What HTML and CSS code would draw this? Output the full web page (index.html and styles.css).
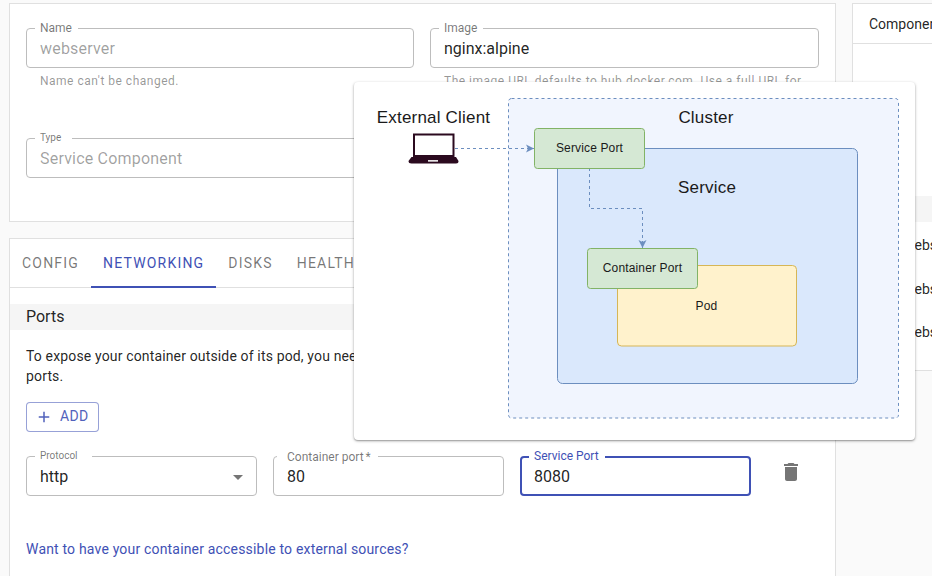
FILE: index.html
```html
<!DOCTYPE html>
<html lang="en">
<head>
<meta charset="utf-8">
<title>Component networking</title>
<link rel="stylesheet" href="styles.css">
</head>
<body>
<div class="page">
  <main class="main-col">
    <section class="card basics">
      <div class="field-grid">
        <div>
          <div class="field">
            <span class="label notch-name">Name</span>
            <span class="value disabled">webserver</span>
          </div>
          <p class="helper">Name can't be changed.</p>
        </div>
        <div>
          <div class="field">
            <span class="label notch-image">Image</span>
            <span class="value">nginx:alpine</span>
          </div>
          <p class="helper">The image URL defaults to hub.docker.com. Use a full URL for private registries.</p>
        </div>
        <div class="field">
          <span class="label small notch-type">Type</span>
          <span class="value disabled">Service Component</span>
        </div>
      </div>
    </section>

    <section class="card details">
      <nav class="tabs">
        <span class="tab">Config</span>
        <span class="tab active">Networking</span>
        <span class="tab">Disks</span>
        <span class="tab">Health</span>
      </nav>
      <h2 class="section-title">Ports</h2>
      <div class="section-body">
        <p class="intro">To expose your container outside of its pod, you need to define the container and service<br>ports.</p>
        <button class="add-btn" type="button">
          <svg class="plus" viewBox="0 0 24 24" width="18" height="18"><path d="M19 13h-6v6h-2v-6H5v-2h6V5h2v6h6v2z"/></svg>
          <span class="add-text">Add</span>
        </button>
        <div class="port-row">
          <div class="field port">
            <span class="label small notch-protocol">Protocol</span>
            <span class="value">http</span>
            <span class="arrow"></span>
          </div>
          <div class="field port">
            <span class="label notch-container">Container port<sup class="req">*</sup></span>
            <span class="value">80</span>
          </div>
          <div class="field port focused">
            <span class="label notch-service">Service Port</span>
            <span class="value">8080</span>
          </div>
          <svg class="trash" viewBox="0 0 24 24" width="24" height="24"><path d="M6 19c0 1.1.9 2 2 2h8c1.1 0 2-.9 2-2V7H6v12zM19 4h-3.5l-1-1h-5l-1 1H5v2h14V4z"/></svg>
        </div>
        <a class="link" href="#">Want to have your container accessible to external sources?</a>
      </div>
    </section>
  </main>

  <aside class="card side">
    <div class="side-head">Components</div>
    <div class="side-bar"></div>
    <ul class="side-list">
      <li>webserver</li>
      <li>webserver</li>
      <li>webserver</li>
    </ul>
  </aside>
</div>

<div class="popover">
  <svg class="diagram" viewBox="354 82 561 358" width="561" height="358">
    <defs>
      <marker id="tip" markerUnits="userSpaceOnUse" markerWidth="10" markerHeight="10" refX="8" refY="5" orient="auto">
        <path class="tip" d="M0 1 L8 5 L0 9 L2 5 Z"/>
      </marker>
    </defs>
    <rect class="cluster" x="508.5" y="98.5" width="390" height="319.5" rx="3"/>
    <rect class="service" x="557.5" y="148.5" width="300" height="235" rx="5"/>
    <rect class="pod" x="617.5" y="265.5" width="179" height="80.5" rx="4"/>
    <path class="flow" d="M455 148.5 H534" marker-end="url(#tip)"/>
    <path class="flow" d="M589.5 168 V208.5 H642.5 V248" marker-end="url(#tip)"/>
    <rect class="port-box" x="534.5" y="128.5" width="110" height="40" rx="3"/>
    <rect class="port-box" x="587.5" y="248.5" width="110" height="40" rx="3"/>
    <path class="laptop" d="M413 133.5 H454.5 V157 H413 Z M415 135.5 V155 H452.5 V135.5 Z"/>
    <path class="laptop" d="M411.5 157 H456 L458.5 161 Q458.5 163.500 456 163.500 H411.500 Q408.500 163.500 408.500 161 Z"/>
    <rect class="laptop-notch" x="428" y="160" width="10" height="1.700"/>
    <text class="t-big" x="433.500" y="122.500">External Client</text>
    <text class="t-big" x="706" y="122.500">Cluster</text>
    <text class="t-big" x="707" y="192.500">Service</text>
    <text class="t-small" x="589.500" y="151.500">Service Port</text>
    <text class="t-small" x="642.500" y="271.500">Container Port</text>
    <text class="t-small" x="706.500" y="309.500">Pod</text>
  </svg>
</div>
</body>
</html>
```

FILE: styles.css
```css
* { box-sizing: border-box; }

html, body {
  margin: 0;
  width: 932px;
  height: 576px;
  overflow: hidden;
  background: #fafafa;
}

body {
  position: relative;
  font-family: Roboto, "Liberation Sans", sans-serif;
  color: rgba(0, 0, 0, 0.87);
}

.page {
  display: flex;
  gap: 16px;
  padding: 3px 0 0 9px;
  width: 932px;
  height: 576px;
  overflow: hidden;
}

.main-col {
  width: 827px;
  flex: none;
  display: flex;
  flex-direction: column;
  gap: 16px;
}

.card {
  background: #fff;
  border: 1px solid #e0e0e0;
}

.basics {
  height: 219px;
  padding: 24px 16px 0;
}

.field-grid {
  display: grid;
  grid-template-columns: 388px 389px;
  column-gap: 16px;
  row-gap: 33px;
}

.field {
  position: relative;
  height: 40px;
  border: 1px solid #bdbdbd;
  border-radius: 4px;
  padding: 1px 13px 0;
  display: flex;
  align-items: center;
  background: #fff;
}

.label {
  position: absolute;
  top: -9px;
  left: 8px;
  padding: 0 5px;
  background: #fff;
  font-size: 12px;
  line-height: 16px;
  color: rgba(0, 0, 0, 0.54);
  white-space: nowrap;
}

.label.small {
  font-size: 10px;
  top: -9px;
}

.notch-name { padding-right: 6px; }
.notch-image { padding-right: 6px; }
.notch-type { padding-right: 11px; }
.notch-protocol { padding-right: 14px; top: -8px; }
.notch-container { left: 3px; padding: 0 7px 0 10px; top: -8px; }
.notch-service { padding-right: 6px; }

.req {
  font-size: 12px;
  line-height: 0;
  vertical-align: baseline;
  margin-left: 2px;
}

.value {
  font-size: 16px;
  line-height: 20px;
}

.value.disabled {
  color: rgba(0, 0, 0, 0.38);
  letter-spacing: 0.2px;
}

.helper {
  margin: 5px 14px 0;
  font-size: 12px;
  line-height: 16px;
  letter-spacing: 0.5px;
  color: rgba(0, 0, 0, 0.42);
}

.details {
  height: 338px;
  border-bottom: 0;
}

.tabs {
  display: flex;
  height: 49px;
  border-bottom: 1px solid #e0e0e0;
}

.tab {
  padding: 0 12px;
  font-size: 14px;
  line-height: 49px;
  text-transform: uppercase;
  color: rgba(0, 0, 0, 0.54);
  letter-spacing: 1.2px;
}

.tab.active {
  color: #3f51b5;
  border-bottom: 2px solid #3f51b5;
  height: 49px;
}

.section-title {
  margin: 16px 0 0;
  height: 26px;
  padding: 0 16px;
  background: #f5f5f5;
  font-size: 16px;
  font-weight: 400;
  line-height: 25px;
}

.section-body {
  padding: 16px 16px 0;
}

.intro {
  margin: 0;
  font-size: 14px;
  line-height: 20px;
  letter-spacing: 0.15px;
  white-space: nowrap;
}

.add-btn {
  display: flex;
  align-items: center;
  gap: 7px;
  width: 73px;
  height: 30px;
  margin-top: 16px;
  padding: 0 0 0 8px;
  background: #fff;
  border: 1px solid rgba(63, 81, 181, 0.6);
  border-radius: 4px;
  font-family: inherit;
  font-size: 14px;
  text-transform: uppercase;
  color: #3f51b5;
  opacity: 0.9;
}

.add-text {
  letter-spacing: 0.3px;
  margin-top: -2px;
}

.plus { fill: #3f51b5; flex: none; }

.port-row {
  display: flex;
  gap: 16px;
  margin-top: 24px;
  align-items: flex-start;
}

.port { width: 231px; flex: none; }

.arrow {
  position: absolute;
  right: 13px;
  top: 18px;
  width: 0;
  height: 0;
  border-left: 5px solid transparent;
  border-right: 5px solid transparent;
  border-top: 5px solid #757575;
}

.focused { border: 2px solid #3f51b5; padding: 2px 12px 0; }
.focused .label { color: #3f51b5; left: 7px; top: -10px; }

.trash {
  fill: #757575;
  margin: 4px 0 0 12px;
  flex: none;
}

.link {
  display: block;
  margin-top: 43px;
  font-size: 14px;
  line-height: 20px;
  letter-spacing: 0.18px;
  color: #3f51b5;
  text-decoration: none;
}

.side {
  flex: 1;
  min-width: 0;
  height: 368px;
  border-right: 0;
  overflow: hidden;
}

.side-head {
  height: 40px;
  padding-left: 16px;
  border-bottom: 1px solid #e0e0e0;
  font-size: 14px;
  line-height: 40px;
  white-space: nowrap;
}

.side-bar {
  height: 26px;
  margin-top: 152px;
  background: #f5f5f5;
}

.side-list {
  list-style: none;
  margin: 0;
  padding: 2px 0 0 51px;
  font-size: 14px;
}

.side-list li {
  height: 43.5px;
  line-height: 43.5px;
  white-space: nowrap;
}

.popover {
  position: absolute;
  left: 354px;
  top: 82px;
  width: 561px;
  height: 358px;
  background: #fff;
  border-radius: 4px;
  box-shadow: 0 1px 3px rgba(0, 0, 0, 0.35), 0 1px 1px rgba(0, 0, 0, 0.14);
}

.diagram { display: block; }

.cluster {
  fill: #f1f5fe;
  stroke: #6c8ebf;
  stroke-dasharray: 3 3;
}

.service { fill: #dae8fc; stroke: #6c8ebf; }
.pod { fill: #fff2cc; stroke: #d6b656; }
.port-box { fill: #d5e8d4; stroke: #82b366; }

.flow {
  fill: none;
  stroke: #6c8ebf;
  stroke-dasharray: 3 3;
}

.tip { fill: #6c8ebf; }

.laptop { fill: #2b0a1f; fill-rule: evenodd; }
.laptop-notch { fill: #e8e4e6; }

.t-big, .t-small {
  font-family: "Liberation Sans", Arial, sans-serif;
  text-anchor: middle;
  fill: #1a1a1a;
}

.t-big { font-size: 17px; letter-spacing: 0.2px; }
.t-small { font-size: 12px; letter-spacing: 0.15px; }
```
